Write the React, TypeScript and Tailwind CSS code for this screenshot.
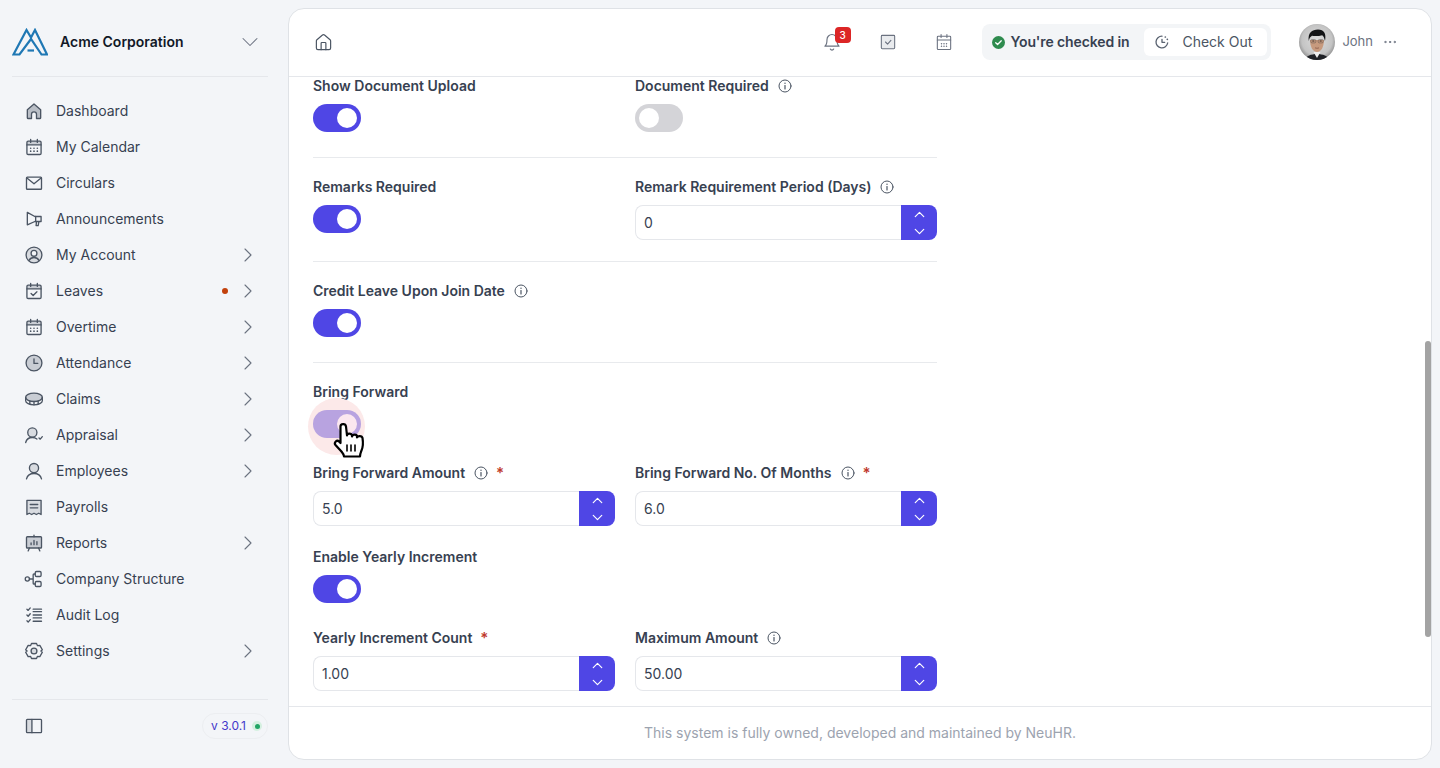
import { ReactNode } from "react";
import { ChevronDown, ChevronRight, ChevronUp, Ellipsis, Home } from "lucide-react";

const fontStack = "font-['Inter','Noto_Sans',sans-serif]";

type IconProps = { children: ReactNode; size?: number; className?: string };

function Icon({ children, size = 20, className = "text-[#4b5563]" }: IconProps) {
  return (
    <svg
      width={size}
      height={size}
      viewBox="0 0 24 24"
      fill="none"
      stroke="currentColor"
      strokeWidth="1.6"
      strokeLinecap="round"
      strokeLinejoin="round"
      className={`shrink-0 ${className}`}
    >
      {children}
    </svg>
  );
}

const CalendarDots = () => (
  <>
    <rect x="3.5" y="5" width="17" height="4.5" fill="#c9cdd4" stroke="none" />
    <rect x="3.5" y="5" width="17" height="16" rx="1.5" />
    <path d="M3.5 9.5h17" />
    <path d="M8 3v3.5M16 3v3.5" />
    <path d="M8 13.5h.01M12 13.5h.01M16 13.5h.01M8 17h.01M12 17h.01M16 17h.01" strokeWidth="2" />
  </>
);

const navIcons: Record<string, ReactNode> = {
  Dashboard: (
    <path d="M4 10.5 12 3.5l8 7V20a1 1 0 0 1-1 1h-4v-5a3 3 0 0 0-6 0v5H5a1 1 0 0 1-1-1z" fill="#b9bec6" />
  ),
  "My Calendar": <CalendarDots />,
  Circulars: (
    <>
      <rect x="3" y="5" width="18" height="14.5" rx="1" />
      <path d="m3.5 6 8.5 7 8.5-7" />
    </>
  ),
  Announcements: (
    <>
      <path d="M4 4v15l9-4h7.5V9H13z" />
      <path d="M14 9v6" />
      <path d="M15 15.5 14.5 20H17l.8-4.5" />
    </>
  ),
  "My Account": (
    <>
      <circle cx="12" cy="12" r="9.5" fill="#d8dbe0" />
      <circle cx="12" cy="10" r="3.5" fill="#f3f5f8" />
      <path d="M6 18.5c1.4-2.6 3.4-3.5 6-3.5s4.6.9 6 3.5" />
    </>
  ),
  Leaves: (
    <>
      <rect x="3.5" y="5" width="17" height="4.5" fill="#c9cdd4" stroke="none" />
      <rect x="3.5" y="5" width="17" height="16" rx="1.5" />
      <path d="M3.5 9.5h17M8 3v3.5M16 3v3.5" />
      <path d="m8.5 15 2.5 2.5 4.5-4.5" />
    </>
  ),
  Overtime: <CalendarDots />,
  Attendance: (
    <>
      <circle cx="12" cy="12" r="9.5" fill="#c9cdd4" />
      <path d="M12 7v5.5h4.500" />
    </>
  ),
  Claims: (
    <>
      <ellipse cx="12" cy="10" rx="10" ry="5" fill="#c9cdd4" />
      <path d="M2 10v4c0 2.8 4.5 5 10 5s10-2.2 10-5v-4" />
      <path d="M7 14.5V18M12 15v4M17 14.5V18" />
    </>
  ),
  Appraisal: (
    <>
      <circle cx="10" cy="9" r="5.5" fill="#d8dbe0" />
      <path d="M2 21c1-3.8 4-6 8-6 2.200 0 4 .6 5.500 1.800" />
      <path d="m18 15.5 1.500 1.500 2.500-3" />
    </>
  ),
  Employees: (
    <>
      <circle cx="12" cy="8.5" r="5.5" fill="#d8dbe0" />
      <path d="M3 21.5c1-4 4.500-6.500 9-6.500s8 2.500 9 6.500" />
    </>
  ),
  Payrolls: (
    <>
      <path d="M3.500 4h17v17l-2.800-1.500-2.900 1.500-2.800-1.500-2.800 1.500-2.900-1.500-2.800 1.500z" fill="#d8dbe0" />
      <path d="M7.500 9h9M7.500 13h9" />
    </>
  ),
  Reports: (
    <>
      <rect x="3" y="4.5" width="18" height="13.500" rx="1" fill="#c9cdd4" />
      <path d="M12 2.500v2M6.500 18 5 21.500M17.500 18l1.500 3.500" />
      <path d="M8.500 14v-2M12 14V9M15.500 14v-3.500" />
    </>
  ),
  "Company Structure": (
    <>
      <circle cx="4" cy="12" r="2.5" />
      <rect x="13.5" y="3" width="7" height="6" rx="1.5" />
      <rect x="13.5" y="15" width="7" height="6" rx="1.5" />
      <path d="M6.500 12H11M13.500 6H12a1 1 0 0 0-1 1v10a1 1 0 0 0 1 1h1.500" />
    </>
  ),
  "Audit Log": (
    <>
      <path d="m3.500 5 1.500 1.500 2.500-3M3.500 12l1.500 1.500 2.500-3M3.500 19l1.500 1.500 2.500-3" />
      <path d="M11 5h10M11 8h10M11 12h10M11 15.500h10M11 19.500h10" />
    </>
  ),
  Settings: (
    <>
      <path d="M9 3h6l1.200 2.600 2.800-.3 3 5.200-1.700 1.500 1.700 1.500-3 5.200-2.800-.3L15 21H9l-1.200-2.600-2.800.3-3-5.200L3.700 12 2 10.500l3-5.200 2.800.3z" />
      <circle cx="12" cy="12" r="3.5" fill="#d8dbe0" />
    </>
  ),
};

const navItems = [
  { label: "Dashboard" },
  { label: "My Calendar" },
  { label: "Circulars" },
  { label: "Announcements" },
  { label: "My Account", arrow: true },
  { label: "Leaves", arrow: true, dot: true },
  { label: "Overtime", arrow: true },
  { label: "Attendance", arrow: true },
  { label: "Claims", arrow: true },
  { label: "Appraisal", arrow: true },
  { label: "Employees", arrow: true },
  { label: "Payrolls" },
  { label: "Reports", arrow: true },
  { label: "Company Structure" },
  { label: "Audit Log" },
  { label: "Settings", arrow: true },
];

function Logo() {
  return (
    <svg width="36" height="28" viewBox="0 0 36 28" fill="none" stroke="#1f78b4" strokeWidth="2.2" className="shrink-0">
      <path d="M1.500 26.500 14.500 2 19 9.500 23 2 35 26.500H29.500L19 11 7.500 26.500z" />
      <path d="M15.500 22.500H22" />
    </svg>
  );
}

function Sidebar() {
  return (
    <aside className="flex h-full w-[288px] shrink-0 flex-col pl-3 pr-5">
      <div className="flex h-[69px] shrink-0 items-center border-b border-[#e5e7eb]">
        <Logo />
        <span className="ml-3 text-sm font-semibold text-[#111827]">Acme Corporation</span>
        <ChevronDown className="ml-auto mr-1 text-[#6b7280]" size={28} strokeWidth={0.9} />
      </div>
      <nav className="mt-4 flex flex-col">
        {navItems.map((item) => (
          <div className="flex h-9 items-center pl-3 pr-2" key={item.label}>
            <Icon>{navIcons[item.label]}</Icon>
            <span className="ml-3 text-sm text-[#374151]">{item.label}</span>
            {item.dot && <span className="ml-auto h-[6px] w-[6px] rounded-full bg-[#c2410c]" />}
            {item.arrow && (
              <ChevronRight
                className={`text-[#6b7280] ${item.dot ? "ml-2" : "ml-auto"}`}
                size={24}
                strokeWidth={1.1}
              />
            )}
          </div>
        ))}
      </nav>
      <div className="mb-2 mt-auto flex h-[53px] items-center justify-between border-t border-[#e5e7eb] pl-3">
        <Icon>
          <rect x="3" y="4" width="6.5" height="16" fill="#d8dbe0" stroke="none" />
          <rect x="3" y="4" width="18" height="16" rx="1" />
          <path d="M9.500 4v16" />
        </Icon>
        <div className="flex h-[26px] items-center gap-[6px] rounded-full border border-[#eceef1] pl-2 pr-[5px] text-xs text-[#4338ca]">
          <span>v 3.0.1</span>
          <span className="flex h-[10px] w-[10px] items-center justify-center rounded-full bg-[#d5f0e0]">
            <span className="h-[5px] w-[5px] rounded-full bg-[#22a565]" />
          </span>
        </div>
      </div>
    </aside>
  );
}

function Avatar() {
  return (
    <svg width="36" height="36" viewBox="0 0 36 36" className="shrink-0 rounded-full">
      <defs>
        <radialGradient id="avatar-bg" cx="50%" cy="45%" r="60%">
          <stop offset="0%" stopColor="#dcdcdc" />
          <stop offset="70%" stopColor="#c4c4c4" />
          <stop offset="100%" stopColor="#7d7d7d" />
        </radialGradient>
      </defs>
      <rect width="36" height="36" fill="url(#avatar-bg)" />
      <path d="M6 36c1-4 6-6 12-6s11 2 12 6z" fill="#1f2126" />
      <path d="M14.500 28h7l-3.500 6z" fill="#efefef" />
      <path d="M11 16c0 7 3 12 7 12s7-5 7-12z" fill="#c79a7e" />
      <path d="M9.800 17C8.500 9 13 5.500 19 5.500s8.500 4 7 11.500c-.6-2.500-1.200-4.800-2.800-5.800-3.500 1-7.700 1-10.200.5-1.800 1-2.800 2.800-3.200 5.300z" fill="#131416" />
      <rect x="11.800" y="15.500" width="5" height="3.400" rx="1.200" fill="none" stroke="#5b504a" strokeWidth="0.5" />
      <rect x="19.200" y="15.500" width="5" height="3.400" rx="1.200" fill="none" stroke="#5b504a" strokeWidth="0.5" />
      <path d="M13.300 17h2M20.700 17h2" stroke="#2a2320" strokeWidth="0.9" />
      <path d="M16 23.800c1.400.6 2.800.6 4 0" stroke="#8a5a48" strokeWidth="0.8" fill="none" />
    </svg>
  );
}

function Header() {
  return (
    <header className="flex h-[68px] shrink-0 items-center border-b border-[#e5e7eb] pb-px pl-[25px] pr-[33px]">
      <Home className="text-[#4b5563]" size={19} strokeWidth={1.5} />
      <div className="ml-auto flex items-center">
        <div className="relative">
          <svg width="20" height="20" viewBox="0 0 24 24" fill="none" stroke="#6b7280" strokeWidth="1.4" strokeLinecap="round" strokeLinejoin="round">
            <path d="M6 9a6 6 0 0 1 12 0c0 6 2.500 8 2.500 8h-17S6 15 6 9z" />
            <path d="M10 20.500a2.200 2.200 0 0 0 4 0" />
          </svg>
          <span className="absolute -right-[9px] -top-[5px] flex h-4 w-4 items-center justify-center rounded-[4px] bg-[#dc2626] text-[10px] font-medium text-white">
            3
          </span>
        </div>
        <svg className="ml-9" width="20" height="20" viewBox="0 0 24 24" fill="#e9ebee" stroke="#6b7280" strokeWidth="1.3" strokeLinecap="round" strokeLinejoin="round">
          <rect x="4" y="4" width="16" height="16" rx="1" />
          <path d="m9 12 2.500 2.500 4-4.500" fill="none" />
        </svg>
        <svg className="ml-9" width="20" height="20" viewBox="0 0 24 24" fill="none" stroke="#6b7280" strokeWidth="1.3" strokeLinecap="round" strokeLinejoin="round">
          <rect x="4" y="5" width="16" height="16" rx="1" />
          <path d="M4 9.500h16M8.500 3v3.500M15.500 3v3.500" />
          <path d="M9 14h.01M12 14h.01M15 14h.01M9 17h.01M12 17h.01M15 17h.01" strokeWidth="1.8" />
        </svg>
        <div className="ml-7 flex h-9 items-center rounded-lg bg-[#f3f5f7] pl-[10px] pr-1">
          <svg width="13" height="13" viewBox="0 0 14 14">
            <circle cx="7" cy="7" r="7" fill="#2e8b4e" />
            <path d="m4 7.200 2 2 4-4" fill="none" stroke="#fff" strokeWidth="1.4" strokeLinecap="round" strokeLinejoin="round" />
          </svg>
          <span className="ml-[6px] text-sm font-semibold tracking-[-0.12px] text-[#374151]">You're checked in</span>
          <div className="ml-[15px] flex h-7 w-[123px] items-center rounded-md bg-white pl-[10px]">
            <svg width="16" height="16" viewBox="0 0 24 24" fill="none" stroke="#5b6472" strokeWidth="2" strokeLinecap="round" strokeLinejoin="round">
              <path d="M20.500 13.500A8.800 8.800 0 1 1 12 3.200" />
              <path d="M12 8v4.500h4" />
              <path d="M17 4.500h.01M20 8h.01" strokeWidth="2.6" />
            </svg>
            <span className="ml-3 text-sm text-[#4b5563]">Check Out</span>
          </div>
        </div>
        <div className="ml-7">
          <Avatar />
        </div>
        <span className="ml-[7px] text-[13px] text-[#6b7280]">John</span>
        <Ellipsis className="ml-[9px] text-[#6b7280]" size={16} strokeWidth={1.5} />
      </div>
    </header>
  );
}

function InfoIcon() {
  return (
    <svg className="ml-[9px] shrink-0" width="14" height="14" viewBox="0 0 14 14" fill="none" stroke="#4b5563" strokeWidth="1" strokeLinecap="round">
      <circle cx="7" cy="7" r="6" />
      <path d="M7 6.500V10" strokeWidth="1.2" />
      <path d="M7 4.200h.01" strokeWidth="1.4" />
    </svg>
  );
}

function Label({ text, info, required }: { text: string; info?: boolean; required?: boolean }) {
  return (
    <div className="mb-2 flex h-[21px] items-center text-sm font-semibold text-[#374151]">
      <span>{text}</span>
      {info && <InfoIcon />}
      {required && <span className="ml-2 text-[15px] text-[#c0392b]">*</span>}
    </div>
  );
}

function Toggle({ on = true }: { on?: boolean }) {
  return (
    <div className={`flex h-7 w-12 items-center rounded-full px-1 ${on ? "justify-end bg-[#4f46e5]" : "bg-[#d4d4d8]"}`}>
      <span className="h-5 w-5 rounded-full bg-white" />
    </div>
  );
}

function HandCursor() {
  return (
    <svg className="absolute left-[19px] top-[12px]" width="34" height="38" viewBox="0 0 34 38" fill="#fff" stroke="#000" strokeWidth="2.2" strokeLinejoin="round" strokeLinecap="round">
      <path d="M8.500 21V4.500c0-3 5-3.500 5.500 0l1 9c0-2.500 4.500-2.500 5 0v1c.5-2.500 5-2.500 5 0v1c.5-2 5-2 5.500.5.800 5 .5 9-1 12.500-1 2.500-1.500 3.500-1.500 6H12c0-2.500-1.500-3.500-3-5.500L3.500 23c-2-2.500 1.500-5.500 3.500-3.500z" />
      <path d="M15 23v6M19 23v6M23 23v6" strokeWidth="1.6" />
    </svg>
  );
}

function ActiveToggle() {
  return (
    <div className="relative h-7 w-12">
      <span className="absolute -left-[5px] -top-[12px] h-[57px] w-[57px] rounded-full bg-[#fce9e9]" />
      <div className="relative flex h-7 w-12 items-center justify-end rounded-full bg-[#b8a3e0] px-1">
        <span className="h-5 w-5 rounded-full bg-[#fbe7ef]" />
      </div>
      <HandCursor />
    </div>
  );
}

function NumberField({ value }: { value: string }) {
  return (
    <div className="flex h-[35px] w-full">
      <span className="flex flex-1 items-center rounded-l-lg border border-r-0 border-[#e5e7eb] pl-2 text-sm text-[#374151]">
        {value}
      </span>
      <div className="flex w-9 flex-col items-center justify-center rounded-r-lg bg-[#4f46e5] text-white">
        <ChevronUp size={17} strokeWidth={1.7} />
        <ChevronDown size={17} strokeWidth={1.7} />
      </div>
    </div>
  );
}

function Divider() {
  return <div className="h-px bg-[#e8eaed]" />;
}

function FormContent() {
  return (
    <div className="-mt-[2px] w-[624px]">
      <div className="grid grid-cols-2 gap-x-5 pb-[25px]">
        <div>
          <Label text="Show Document Upload" />
          <Toggle />
        </div>
        <div>
          <Label text="Document Required" info />
          <Toggle on={false} />
        </div>
      </div>
      <Divider />
      <div className="grid grid-cols-2 gap-x-5 pb-[21px] pt-[18px]">
        <div>
          <Label text="Remarks Required" />
          <Toggle />
        </div>
        <div>
          <Label text="Remark Requirement Period (Days)" info />
          <NumberField value="0" />
        </div>
      </div>
      <Divider />
      <div className="pb-[25px] pt-[18px]">
        <Label text="Credit Leave Upon Join Date" info />
        <Toggle />
      </div>
      <Divider />
      <div className="pb-6 pt-[18px]">
        <Label text="Bring Forward" />
        <ActiveToggle />
      </div>
      <div className="grid grid-cols-2 gap-x-5 pb-5">
        <div>
          <Label text="Bring Forward Amount" info required />
          <NumberField value="5.0" />
        </div>
        <div>
          <Label text="Bring Forward No. Of Months" info required />
          <NumberField value="6.0" />
        </div>
      </div>
      <div className="pb-6">
        <Label text="Enable Yearly Increment" />
        <Toggle />
      </div>
      <div className="grid grid-cols-2 gap-x-5">
        <div>
          <Label text="Yearly Increment Count" required />
          <NumberField value="1.00" />
        </div>
        <div>
          <Label text="Maximum Amount" info />
          <NumberField value="50.00" />
        </div>
      </div>
    </div>
  );
}

export default function App() {
  return (
    <div className={`flex h-[768px] w-[1440px] overflow-hidden bg-[#f3f5f8] py-2 pr-2 ${fontStack}`}>
      <Sidebar />
      <main className="flex min-w-0 flex-1 flex-col overflow-hidden rounded-2xl border border-[#dfe2e6] bg-white">
        <Header />
        <div className="relative flex-1 overflow-hidden pl-6">
          <FormContent />
          <div className="absolute right-0 top-[264px] h-[296px] w-[6px] rounded-full bg-[#a3a3a3]" />
        </div>
        <footer className="flex h-[53px] shrink-0 items-center justify-center border-t border-[#e5e7eb] text-sm text-[#9ca3af]">
          This system is fully owned, developed and maintained by NeuHR.
        </footer>
      </main>
    </div>
  );
}
